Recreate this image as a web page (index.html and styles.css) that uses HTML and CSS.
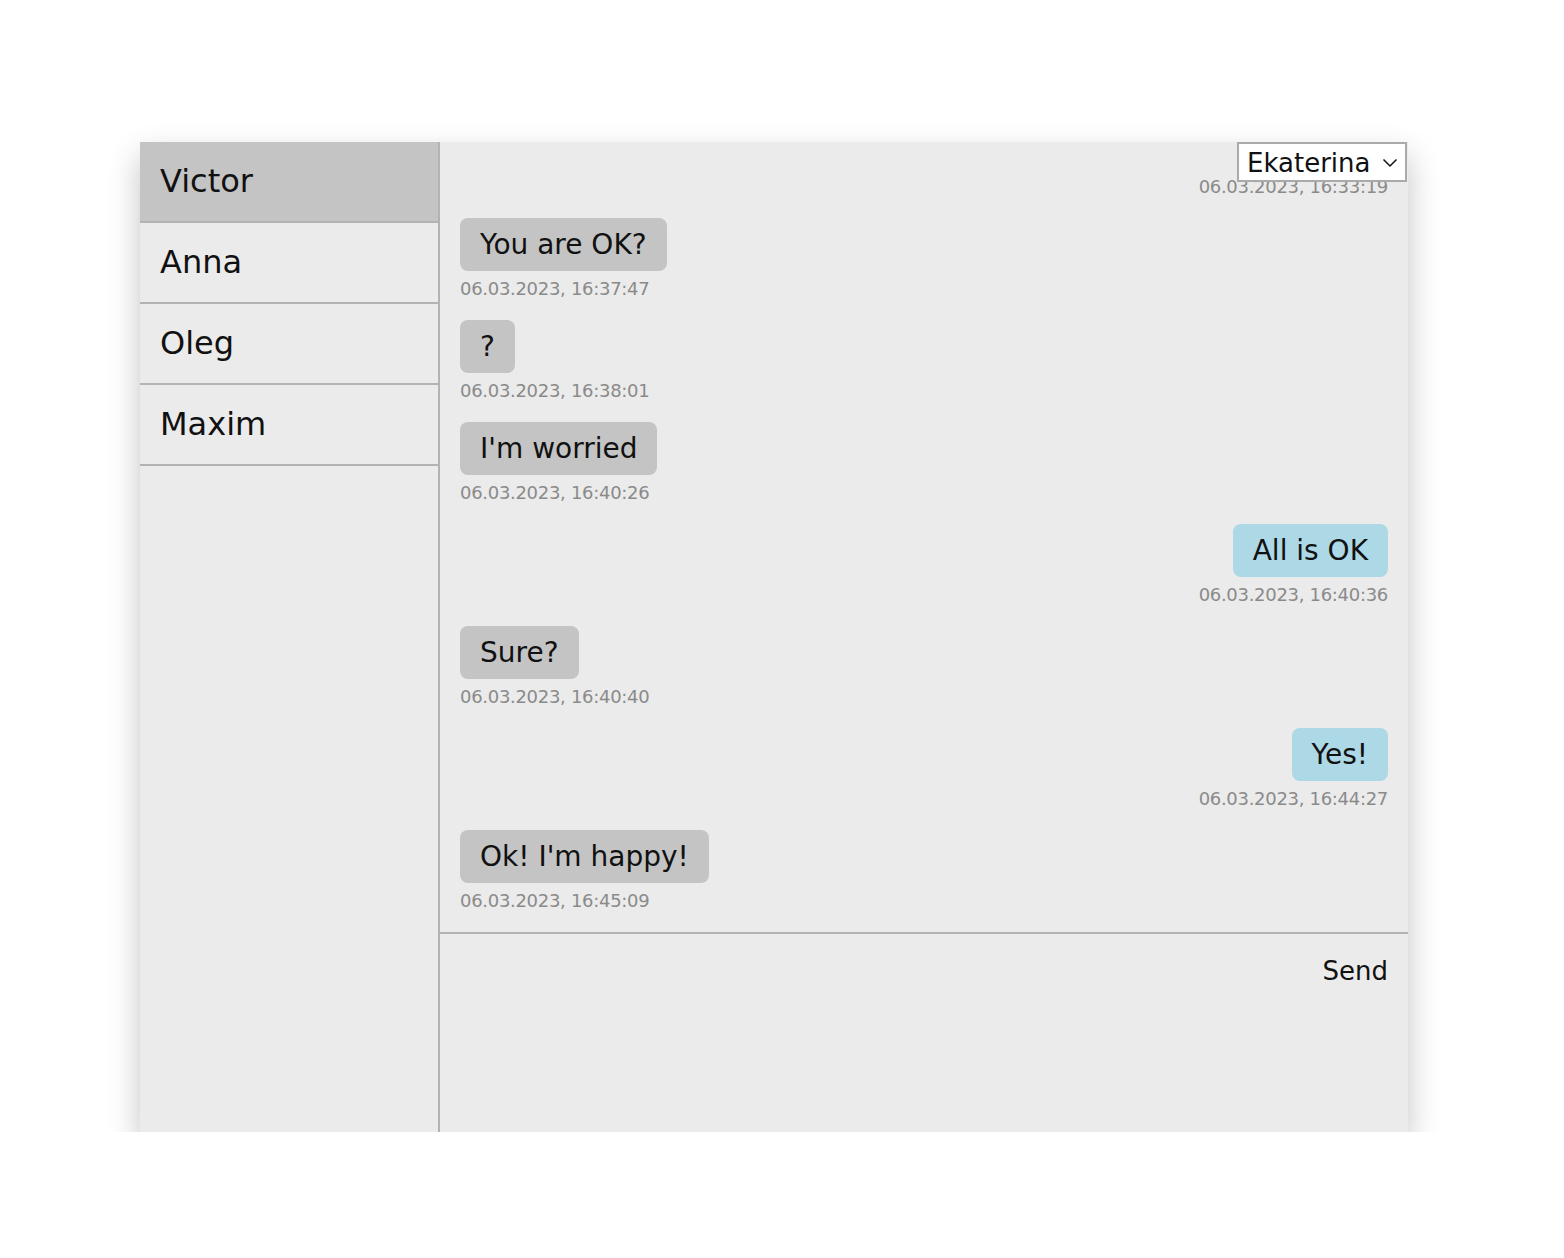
FILE: index.html
```html
<!DOCTYPE html>
<html lang="en">
<head>
<meta charset="utf-8">
<title>Chat</title>
<link rel="stylesheet" href="styles.css">
</head>
<body>
<div class="app">
  <aside class="contacts">
    <div class="contact active">Victor</div>
    <div class="contact">Anna</div>
    <div class="contact">Oleg</div>
    <div class="contact">Maxim</div>
  </aside>
  <main class="chat">
    <div class="user-select">
      <span class="user-name">Ekaterina</span>
      <svg class="chevron" width="16" height="10" viewBox="0 0 16 10"><path d="M1.5 1.5 L8 8 L14.5 1.5" fill="none" stroke="#111" stroke-width="1.5"/></svg>
    </div>
    <div class="messages">
      <div class="msg own"><div class="time">06.03.2023, 16:33:19</div></div>
      <div class="msg"><div class="bubble">You are OK?</div><div class="time">06.03.2023, 16:37:47</div></div>
      <div class="msg"><div class="bubble">?</div><div class="time">06.03.2023, 16:38:01</div></div>
      <div class="msg"><div class="bubble">I'm worried</div><div class="time">06.03.2023, 16:40:26</div></div>
      <div class="msg own"><div class="bubble">All is OK</div><div class="time">06.03.2023, 16:40:36</div></div>
      <div class="msg"><div class="bubble">Sure?</div><div class="time">06.03.2023, 16:40:40</div></div>
      <div class="msg own"><div class="bubble">Yes!</div><div class="time">06.03.2023, 16:44:27</div></div>
      <div class="msg"><div class="bubble">Ok! I'm happy!</div><div class="time">06.03.2023, 16:45:09</div></div>
    </div>
    <form class="composer">
      <textarea class="input" aria-label="Message"></textarea>
      <button type="button" class="send">Send</button>
    </form>
  </main>
</div>
</body>
</html>
```
FILE: styles.css
```css
* { box-sizing: border-box; }
html, body { margin: 0; padding: 0; background: #fff; }
body {
  font-family: "DejaVu Sans", sans-serif;
  color: #111;
}
.app {
  margin: 142px 0 0 140px;
  width: 1268px;
  height: 990px;
  display: flex;
  background: #ebebeb;
  box-shadow: 0 14px 30px rgba(0, 0, 0, 0.24);
}
.contacts {
  width: 300px;
  flex: none;
  border-right: 2px solid #b3b3b3;
  display: flex;
  flex-direction: column;
}
.contact {
  height: 81px;
  padding: 20px 20px 0;
  line-height: 39px;
  font-size: 32px;
  border-bottom: 2px solid #b3b3b3;
  color: #111;
}
.contact.active { background: #c4c4c4; }
.chat {
  flex: 1;
  position: relative;
  display: flex;
  flex-direction: column;
  min-width: 0;
}
.user-select {
  position: absolute;
  top: 0;
  right: 1px;
  width: 170px;
  height: 40px;
  background: #fff;
  border: 2px solid #aaa;
  display: flex;
  align-items: center;
  justify-content: space-between;
  padding: 2px 7px 0 8px;
  font-size: 26px;
  z-index: 2;
}
.user-name { line-height: 30px; }
.chevron { margin-top: 0; }
.messages {
  height: 792px;
  flex: none;
  overflow: hidden;
  display: flex;
  flex-direction: column;
  justify-content: flex-end;
  gap: 20px;
  padding: 20px;
  border-bottom: 2px solid #b3b3b3;
}
.msg {
  display: flex;
  flex-direction: column;
  align-items: flex-start;
  flex: none;
}
.msg.own { align-items: flex-end; }
.bubble {
  background: #c4c4c4;
  border-radius: 8px;
  padding: 10px 20px;
  font-size: 28px;
  line-height: 33px;
  white-space: nowrap;
}
.own .bubble { background: #add8e6; }
.time {
  margin-top: 7px;
  font-size: 18px;
  line-height: 22px;
  letter-spacing: -0.3px;
  color: #8a8a8a;
}
.composer {
  flex: 1;
  display: flex;
  align-items: flex-start;
  padding: 22px 20px 20px;
  gap: 20px;
}
.input {
  flex: 1;
  height: 100%;
  background: transparent;
  border: none;
  outline: none;
  resize: none;
  font-family: inherit;
  font-size: 26px;
}
.send {
  background: none;
  border: none;
  padding: 0;
  font-family: inherit;
  font-size: 26px;
  line-height: 30px;
  color: #111;
  cursor: pointer;
}
```
